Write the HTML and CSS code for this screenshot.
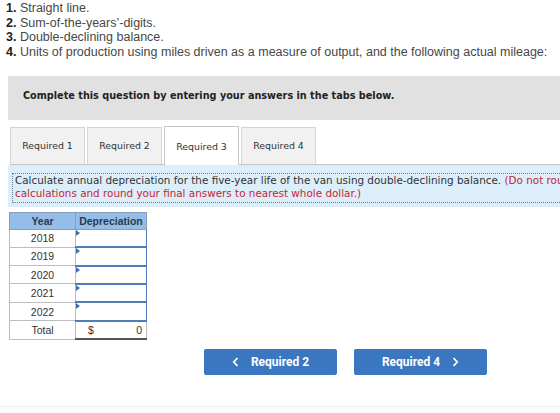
FILE: index.html
```html
<!DOCTYPE html>
<html>
<head>
<meta charset="utf-8">
<link rel="stylesheet" href="styles.css">
</head>
<body>
<ol class="methods">
  <li><b>1.</b> Straight line.</li>
  <li><b>2.</b> Sum-of-the-years’-digits.</li>
  <li><b>3.</b> Double-declining balance.</li>
  <li><b>4.</b> Units of production using miles driven as a measure of output, and the following actual mileage:</li>
</ol>

<div class="banner">Complete this question by entering your answers in the tabs below.</div>

<div class="tabs">
  <div class="tab">Required 1</div>
  <div class="tab">Required 2</div>
  <div class="tab active">Required 3</div>
  <div class="tab">Required 4</div>
</div>

<div class="prompt">
  <div class="prompt-text">Calculate annual depreciation for the five-year life of the van using double-declining balance. <span class="note">(Do not round intermediate<br>calculations and round your final answers to nearest whole dollar.)</span></div>
</div>

<table class="grid">
  <tr><th class="yr">Year</th><th class="dep">Depreciation</th></tr>
  <tr><td class="yr">2018</td><td class="input"><span class="flag"></span></td></tr>
  <tr><td class="yr">2019</td><td class="input"><span class="flag"></span></td></tr>
  <tr><td class="yr">2020</td><td class="input"><span class="flag"></span></td></tr>
  <tr><td class="yr">2021</td><td class="input"><span class="flag"></span></td></tr>
  <tr><td class="yr">2022</td><td class="input"><span class="flag"></span></td></tr>
  <tr class="total"><td class="yr">Total</td><td class="sum"><span>$</span><span>0</span></td></tr>
</table>

<div class="nav">
  <button class="btn">
    <svg class="chev" width="7" height="10" viewBox="0 0 7 10"><path d="M5.5 1 L1.8 5 L5.5 9" fill="none" stroke="#fff" stroke-width="1.8"/></svg>
    <span>Required 2</span>
  </button>
  <button class="btn">
    <span>Required 4</span>
    <svg class="chev" width="7" height="10" viewBox="0 0 7 10"><path d="M1.5 1 L5.2 5 L1.5 9" fill="none" stroke="#fff" stroke-width="1.8"/></svg>
  </button>
</div>

<div class="footer-line"></div>
</body>
</html>
```

FILE: styles.css
```css
html, body {
  margin: 0;
  padding: 0;
  background: #fff;
  overflow: hidden;
}

body {
  width: 560px;
  height: 413px;
  position: relative;
}

.methods {
  list-style: none;
  margin: 0;
  padding: 1px 0 0 6px;
  font-family: "Liberation Sans", Arial, sans-serif;
  font-size: 12.5px;
  line-height: 14.7px;
  color: #474747;
  white-space: nowrap;
}

.methods b {
  color: #222;
}

.banner {
  margin: 16px 0 0 8px;
  height: 44px;
  box-sizing: border-box;
  background: #e1e1e1;
  padding: 14px 0 0 15px;
  font-family: "DejaVu Sans", Verdana, sans-serif;
  font-weight: bold;
  font-size: 9.7px;
  color: #222;
  white-space: nowrap;
}

.tabs {
  display: flex;
  align-items: flex-end;
  gap: 2px;
  margin: 7px 0 0 10px;
  height: 37px;
  border-bottom: 1px solid #c4c4c4;
  font-family: "DejaVu Sans", Verdana, sans-serif;
  font-size: 9.4px;
  color: #333;
}

.tab {
  box-sizing: border-box;
  width: 75px;
  height: 37px;
  display: flex;
  align-items: center;
  justify-content: center;
  background: #f1f1f1;
  border: 1px solid #d4d4d4;
  border-bottom: none;
  white-space: nowrap;
}

.tab.active {
  background: #fff;
  border-color: #c6c6c6;
  height: 39px;
  margin-bottom: -1px;
  padding-top: 1px;
}

.prompt {
  margin: 0 0 0 8px;
  height: 42px;
  background: #ddeefb;
  box-sizing: border-box;
  padding: 8px 0 0 4px;
}

.prompt-text {
  border: 1px dotted #6b7f94;
  border-right: none;
  padding: 0 0 2px 2px;
  font-family: "DejaVu Sans", Verdana, sans-serif;
  font-size: 10.4px;
  line-height: 13px;
  color: #333;
  white-space: nowrap;
}

.prompt-text .note {
  color: #c4262e;
}

.grid {
  margin: 5px 0 0 9px;
  border-collapse: collapse;
  font-family: "Liberation Sans", Arial, sans-serif;
  font-size: 10.5px;
  color: #333;
}

.grid th {
  background: #94bde9;
  color: #2a3a4d;
  font-weight: bold;
  height: 16px;
  padding: 0;
  border: 1px solid #8a9db3;
  text-align: center;
}

.grid th.yr { width: 65px; }
.grid th.dep { width: 70px; }

.grid td {
  height: 16.4px;
  padding: 0;
  border: 1px solid #bdbdbd;
  text-align: center;
}

.grid td.input {
  border: 1px solid #4f7db8;
  border-bottom-width: 2px;
  position: relative;
  background: #fff;
}

.flag {
  position: absolute;
  left: 0;
  top: 0;
  width: 0;
  height: 0;
  border-top: 3px solid transparent;
  border-bottom: 3px solid transparent;
  border-left: 4px solid #3f6fb0;
}

.grid td.sum {
  border-bottom: 2px solid #555;
  padding: 0 4px 0 12px;
  text-align: left;
}

.grid td.sum span:last-child {
  float: right;
}

.nav {
  display: flex;
  gap: 17px;
  margin: 9px 0 0 204px;
}

.btn {
  width: 133px;
  height: 26px;
  border: none;
  border-radius: 2px;
  background: #3a77c0;
  color: #fff;
  font-family: Roboto, "Liberation Sans", sans-serif;
  font-weight: bold;
  font-size: 12px;
  padding: 0;
  display: flex;
  align-items: center;
  justify-content: center;
  gap: 12px;
}

.footer-line {
  position: absolute;
  left: 0;
  right: 0;
  top: 406px;
  height: 7px;
  border-top: 1px solid #eeeeee;
  background: #fbfbfb;
}
```
